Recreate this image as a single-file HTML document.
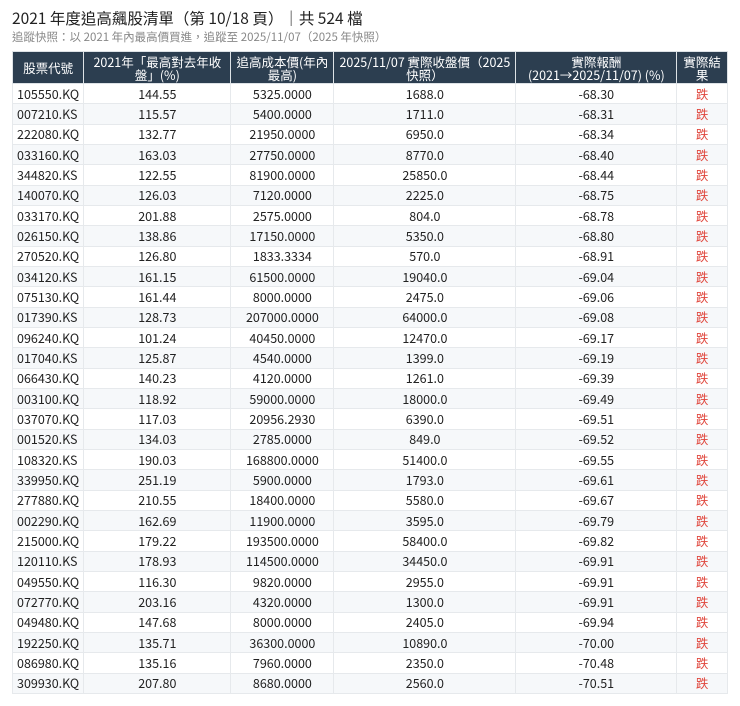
<!DOCTYPE html>
<html><head><meta charset="utf-8"><style>
body{margin:0;background:#fff;font-family:"Liberation Sans","Noto Sans CJK TC",sans-serif;color:#222;}
.t{position:absolute;left:12px;top:7px;font-size:15.5px;color:#222;font-family:"Noto Sans CJK TC",sans-serif;}
.s{position:absolute;left:12px;top:29px;font-size:11.5px;color:#888;font-family:"Noto Sans CJK TC",sans-serif;}
table{position:absolute;left:12px;top:51px;border-collapse:collapse;width:716px;font-size:12.5px;font-family:"Noto Sans CJK TC",sans-serif;}
th{background:#2c3e50;color:#fff;font-weight:normal;line-height:13px;height:31px;padding:0 2px;border:1px solid #dde2e6;font-size:12.5px;}
tbody tr{height:20.33px;}
td{padding:0 4px;border:1px solid #e6e9ec;text-align:center;line-height:16px;}
td:first-child{text-align:left;}
tr:nth-child(even) td{background:#f6f8fa;}
td.r{color:#e0463c;}
</style></head><body>
<div class="t">2021 年度追高飆股清單（第 10/18 頁）｜共 524 檔</div>
<div class="s">追蹤快照：以 2021 年內最高價買進，追蹤至 2025/11/07（2025 年快照）</div>
<table>
<colgroup><col style="width:70px"><col style="width:148px"><col style="width:103px"><col style="width:183px"><col style="width:161px"><col style="width:51px"></colgroup>
<thead><tr><th>股票代號</th><th>2021年「最高對去年收<br>盤」(%)</th><th>追高成本價(年內<br>最高)</th><th>2025/11/07 實際收盤價（2025<br>快照）</th><th>實際報酬<br>(2021→2025/11/07) (%)</th><th>實際結<br>果</th></tr></thead>
<tbody>
<tr><td>105550.KQ</td><td>144.55</td><td>5325.0000</td><td>1688.0</td><td>-68.30</td><td class="r">跌</td></tr>
<tr><td>007210.KS</td><td>115.57</td><td>5400.0000</td><td>1711.0</td><td>-68.31</td><td class="r">跌</td></tr>
<tr><td>222080.KQ</td><td>132.77</td><td>21950.0000</td><td>6950.0</td><td>-68.34</td><td class="r">跌</td></tr>
<tr><td>033160.KQ</td><td>163.03</td><td>27750.0000</td><td>8770.0</td><td>-68.40</td><td class="r">跌</td></tr>
<tr><td>344820.KS</td><td>122.55</td><td>81900.0000</td><td>25850.0</td><td>-68.44</td><td class="r">跌</td></tr>
<tr><td>140070.KQ</td><td>126.03</td><td>7120.0000</td><td>2225.0</td><td>-68.75</td><td class="r">跌</td></tr>
<tr><td>033170.KQ</td><td>201.88</td><td>2575.0000</td><td>804.0</td><td>-68.78</td><td class="r">跌</td></tr>
<tr><td>026150.KQ</td><td>138.86</td><td>17150.0000</td><td>5350.0</td><td>-68.80</td><td class="r">跌</td></tr>
<tr><td>270520.KQ</td><td>126.80</td><td>1833.3334</td><td>570.0</td><td>-68.91</td><td class="r">跌</td></tr>
<tr><td>034120.KS</td><td>161.15</td><td>61500.0000</td><td>19040.0</td><td>-69.04</td><td class="r">跌</td></tr>
<tr><td>075130.KQ</td><td>161.44</td><td>8000.0000</td><td>2475.0</td><td>-69.06</td><td class="r">跌</td></tr>
<tr><td>017390.KS</td><td>128.73</td><td>207000.0000</td><td>64000.0</td><td>-69.08</td><td class="r">跌</td></tr>
<tr><td>096240.KQ</td><td>101.24</td><td>40450.0000</td><td>12470.0</td><td>-69.17</td><td class="r">跌</td></tr>
<tr><td>017040.KS</td><td>125.87</td><td>4540.0000</td><td>1399.0</td><td>-69.19</td><td class="r">跌</td></tr>
<tr><td>066430.KQ</td><td>140.23</td><td>4120.0000</td><td>1261.0</td><td>-69.39</td><td class="r">跌</td></tr>
<tr><td>003100.KQ</td><td>118.92</td><td>59000.0000</td><td>18000.0</td><td>-69.49</td><td class="r">跌</td></tr>
<tr><td>037070.KQ</td><td>117.03</td><td>20956.2930</td><td>6390.0</td><td>-69.51</td><td class="r">跌</td></tr>
<tr><td>001520.KS</td><td>134.03</td><td>2785.0000</td><td>849.0</td><td>-69.52</td><td class="r">跌</td></tr>
<tr><td>108320.KS</td><td>190.03</td><td>168800.0000</td><td>51400.0</td><td>-69.55</td><td class="r">跌</td></tr>
<tr><td>339950.KQ</td><td>251.19</td><td>5900.0000</td><td>1793.0</td><td>-69.61</td><td class="r">跌</td></tr>
<tr><td>277880.KQ</td><td>210.55</td><td>18400.0000</td><td>5580.0</td><td>-69.67</td><td class="r">跌</td></tr>
<tr><td>002290.KQ</td><td>162.69</td><td>11900.0000</td><td>3595.0</td><td>-69.79</td><td class="r">跌</td></tr>
<tr><td>215000.KQ</td><td>179.22</td><td>193500.0000</td><td>58400.0</td><td>-69.82</td><td class="r">跌</td></tr>
<tr><td>120110.KS</td><td>178.93</td><td>114500.0000</td><td>34450.0</td><td>-69.91</td><td class="r">跌</td></tr>
<tr><td>049550.KQ</td><td>116.30</td><td>9820.0000</td><td>2955.0</td><td>-69.91</td><td class="r">跌</td></tr>
<tr><td>072770.KQ</td><td>203.16</td><td>4320.0000</td><td>1300.0</td><td>-69.91</td><td class="r">跌</td></tr>
<tr><td>049480.KQ</td><td>147.68</td><td>8000.0000</td><td>2405.0</td><td>-69.94</td><td class="r">跌</td></tr>
<tr><td>192250.KQ</td><td>135.71</td><td>36300.0000</td><td>10890.0</td><td>-70.00</td><td class="r">跌</td></tr>
<tr><td>086980.KQ</td><td>135.16</td><td>7960.0000</td><td>2350.0</td><td>-70.48</td><td class="r">跌</td></tr>
<tr><td>309930.KQ</td><td>207.80</td><td>8680.0000</td><td>2560.0</td><td>-70.51</td><td class="r">跌</td></tr>
</tbody></table>
</body></html>
